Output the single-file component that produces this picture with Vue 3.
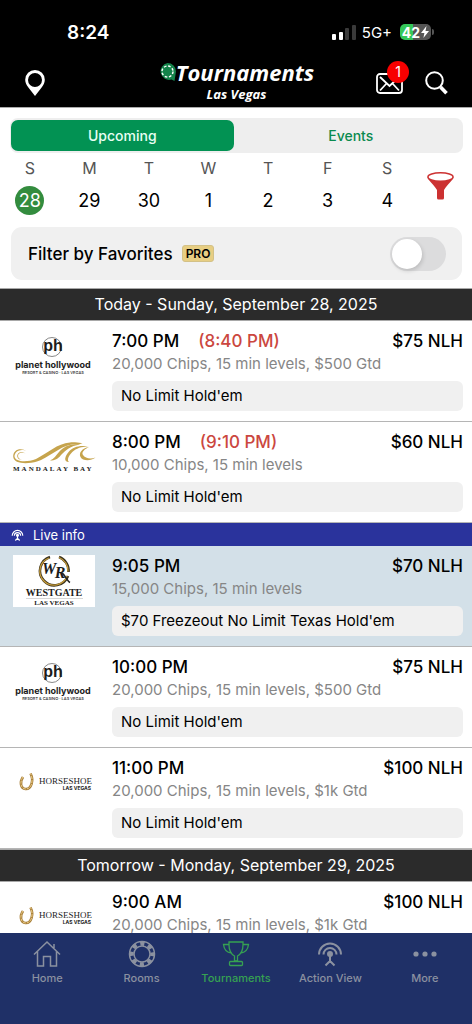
<script setup>
import { ref } from 'vue'

const view = ref('Upcoming')
const selectedDay = ref(28)
const favoritesOnly = ref(false)

const days = [
  { letter: 'S', date: 28 },
  { letter: 'M', date: 29 },
  { letter: 'T', date: 30 },
  { letter: 'W', date: 1 },
  { letter: 'T', date: 2 },
  { letter: 'F', date: 3 },
  { letter: 'S', date: 4 },
]

const sections = [
  {
    title: 'Today - Sunday, September 28, 2025',
    events: [
      { logo: 'planet', time: '7:00 PM', late: '(8:40 PM)', price: '$75 NLH', info: '20,000 Chips, 15 min levels, $500 Gtd', name: "No Limit Hold'em" },
      { logo: 'mandalay', time: '8:00 PM', late: '(9:10 PM)', price: '$60 NLH', info: '10,000 Chips, 15 min levels', name: "No Limit Hold'em" },
      { logo: 'westgate', time: '9:05 PM', price: '$70 NLH', info: '15,000 Chips, 15 min levels', name: "$70 Freezeout No Limit Texas Hold'em", live: true },
      { logo: 'planet', time: '10:00 PM', price: '$75 NLH', info: '20,000 Chips, 15 min levels, $500 Gtd', name: "No Limit Hold'em" },
      { logo: 'horseshoe', time: '11:00 PM', price: '$100 NLH', info: '20,000 Chips, 15 min levels, $1k Gtd', name: "No Limit Hold'em" },
    ],
  },
  {
    title: 'Tomorrow - Monday, September 29, 2025',
    events: [
      { logo: 'horseshoe', time: '9:00 AM', price: '$100 NLH', info: '20,000 Chips, 15 min levels, $1k Gtd' },
    ],
  },
]

const tabs = [
  { id: 'home', label: 'Home' },
  { id: 'rooms', label: 'Rooms' },
  { id: 'tournaments', label: 'Tournaments', active: true },
  { id: 'action', label: 'Action View' },
  { id: 'more', label: 'More' },
]
</script>

<template>
  <div class="app">
    <header class="top">
      <div class="status">
        <span class="clock">8:24</span>
        <div class="status-right">
          <svg class="signal" width="24" height="15" viewBox="0 0 24 15" aria-hidden="true">
            <rect x="0" y="9" width="4" height="6" rx="1" fill="#fff" />
            <rect x="7" y="7" width="4" height="8" rx="1" fill="#fff" />
            <rect x="13" y="3" width="4" height="12" rx="1" fill="#3a3a3a" />
            <rect x="20" y="0" width="4" height="15" rx="1" fill="#3a3a3a" />
          </svg>
          <span class="network">5G+</span>
          <span class="battery">
            <span>42</span>
            <svg width="8" height="12" viewBox="0 0 8 12" aria-hidden="true"><path d="M5.500 0 0 7h3.400L2.400 12 8 5H4.500z" fill="#fff" /></svg>
          </span>
        </div>
      </div>
      <div class="nav">
        <button class="icon-btn" aria-label="Location">
          <svg width="20" height="26" viewBox="0 0 20 26"><path fill="#fff" fill-rule="evenodd" d="M10 0a9.800 9.800 0 0 1 9.800 9.800c0 3-1.300 5.200-3 7.500L10 26l-6.800-8.700C1.500 15 .2 12.800.2 9.800A9.800 9.800 0 0 1 10 0zm0 3a7 7 0 1 0 0 14 7 7 0 0 0 0-14z" /></svg>
        </button>
        <h1 class="brand">
          <span class="brand-name">
            <svg width="17" height="18" viewBox="0 0 17 18" aria-hidden="true">
              <path d="M8.500 0A8.500 8.500 0 0 1 17 8.500L15.500 18l-3-1.500A8.500 8.500 0 1 1 8.500 0z" fill="#14834a" />
              <circle cx="8.500" cy="8.500" r="5.500" fill="none" stroke="#fff" stroke-width="1.400" stroke-dasharray="2.600 1.720" />
            </svg>
            <span>Tournaments</span>
          </span>
          <span class="brand-city">Las Vegas</span>
        </h1>
        <div class="nav-right">
          <button class="icon-btn mail" aria-label="Messages, 1 unread">
            <svg width="27" height="21" viewBox="0 0 27 21" fill="none" stroke="#fff" stroke-width="1.800">
              <rect x="1" y="1" width="25" height="19" rx="3" />
              <path d="M4 4l9.500 9L23 4M4 17.500l6.500-7M23 17.500l-6.500-7" />
            </svg>
            <span class="badge">1</span>
          </button>
          <button class="icon-btn" aria-label="Search">
            <svg width="23" height="24" viewBox="0 0 23 24" fill="none" stroke="#fff">
              <circle cx="9.500" cy="9.500" r="8.300" stroke-width="2" />
              <path d="M15.500 16l6 6.300" stroke-width="3.600" />
            </svg>
          </button>
        </div>
      </div>
    </header>

    <section class="controls">
      <div class="segment">
        <button v-for="v in ['Upcoming', 'Events']" :key="v" :class="{ on: view === v }" @click="view = v">{{ v }}</button>
      </div>

      <div class="week">
        <div class="days">
          <button v-for="d in days" :key="d.date" class="day" :class="{ on: selectedDay === d.date }" @click="selectedDay = d.date">
            <span class="letter">{{ d.letter }}</span>
            <span class="date">{{ d.date }}</span>
          </button>
        </div>
        <button class="icon-btn funnel" aria-label="Filter">
          <svg width="27" height="28" viewBox="0 0 27 28">
            <path d="M.5 5.500c.8 3 5.500 6 9.500 12.500V26q0 1.500 1.500 1.500h4q1.500 0 1.500-1.500v-8C21 11.500 25.700 8.500 26.500 5.500z" fill="#cc3131" />
            <ellipse cx="13.500" cy="5" rx="12.600" ry="4.200" fill="#fff" stroke="#cc3131" stroke-width="1.400" />
          </svg>
        </button>
      </div>

      <label class="favorites">
        <span class="fav-text">Filter by Favorites</span>
        <span class="pro">PRO</span>
        <input v-model="favoritesOnly" class="toggle" type="checkbox" />
      </label>
    </section>

    <main class="list">
      <section v-for="s in sections" :key="s.title">
        <h2 class="section-title">{{ s.title }}</h2>
        <article v-for="e in s.events" :key="e.time">
          <div v-if="e.live" class="live">
            <svg width="13" height="12" viewBox="0 0 26 25" fill="none" stroke="#fff" stroke-width="2.400">
              <path d="M2 14a11 11 0 1 1 22 0M6.500 14a6.500 6.500 0 1 1 13 0M13 13v7M8.500 24l4.500-4.500 4.500 4.500" />
              <circle cx="13" cy="13" r="2" fill="#fff" />
            </svg>
            <span>Live info</span>
          </div>
          <div class="row" :class="{ highlight: e.live }">
            <svg v-if="e.logo === 'planet'" class="logo" viewBox="0 0 82 52" role="img" aria-label="Planet Hollywood">
              <circle cx="39" cy="17" r="9.500" fill="none" stroke="#555" stroke-width=".7" />
              <text x="40" y="21" class="ph-mark">ph</text>
              <text x="40" y="38" class="ph-name">planet hollywood</text>
              <text x="40" y="44" class="ph-sub">RESORT &amp; CASINO · LAS VEGAS</text>
            </svg>
            <svg v-else-if="e.logo === 'mandalay'" class="logo" viewBox="0 0 82 52" role="img" aria-label="Mandalay Bay">
              <g fill="#c6a44d">
                <path d="M14 20.500C8 17 1.500 20.500 1.500 25.500 2 31 14 31.500 23 28 35 22 44 12.500 57 11.500c6-.6 9 1 12.500.5-4 2.500-8 1-12 1.700C46 16 35 27 24 30.500 14 33.500.5 33 .2 25.500 0 18.500 8 16 14 20.500z" />
                <path d="M12.500 22.500C9 20.500 5 22 5 25c0 2 2 3.500 4 4-3-.2-5-2-4.800-4.300C4.500 21 9.500 19.500 12.500 22.500z" />
                <path d="M67 13.500C57 15 53 19 48 24c-3 4-6 5.500-11 5.500 4-1.500 6-5 9-8.500C51 15.500 57 12.500 67 13.500z" />
                <path d="M76 16c-8-1-14 2-18 6.500-3 3.500-4 7-2 8.500-6 0-4-6 0-10.500C60 16 68 13.500 76 16z" />
                <path d="M76 16c-4 2-8 5-6 8 2 3.500 8 4.500 12.500 2.500-5 4-13 3.500-15-.5C65.500 22 69 17 76 16z" />
              </g>
              <text x="0" y="40" class="mb-name">MANDALAY BAY</text>
            </svg>
            <svg v-else-if="e.logo === 'westgate'" class="logo" viewBox="0 0 82 52" role="img" aria-label="Westgate Las Vegas">
              <rect width="82" height="52" fill="#fff" />
              <path d="M37 2A14.500 14.500 0 1 0 55 21M46 2a14.500 14.500 0 0 1 9.500 15" fill="none" stroke="#3b331f" stroke-width="2.600" />
              <path d="M36 3A14 14 0 1 0 54 21M46 2.500a14 14 0 0 1 9 14" fill="none" stroke="#c79d3a" stroke-width="1.300" />
              <text x="36" y="19" class="wg-mark">W</text>
              <text x="47" y="23" class="wg-mark">R</text>
              <path d="M49 18c4 3 5 8 8 9.500" fill="none" stroke="#222" stroke-width="1.600" />
              <text x="41" y="41" class="wg-name">WESTGATE</text>
              <path d="M13 43.500h57" stroke="#bbb" stroke-width=".6" />
              <text x="41" y="50" class="wg-sub">LAS VEGAS</text>
            </svg>
            <svg v-else class="logo" viewBox="0 0 82 52" role="img" aria-label="Horseshoe Las Vegas">
              <path d="M10 20c-3.500 5-2.500 11.500 2.500 12 6 .5 8.500-9 5-15.500" fill="none" stroke="#a87f3a" stroke-width="2.600" />
              <path d="M10 20c-3.500 5-2.500 11.500 2.500 12 6 .5 8.500-9 5-15.500" fill="none" stroke="#f0d28c" stroke-width="1" stroke-dasharray="3 1" />
              <text x="79" y="27" class="hs-name">HORSESHOE</text>
              <text x="78" y="33" class="hs-sub">LAS VEGAS</text>
            </svg>
            <div class="details">
              <div class="headline">
                <span class="time">{{ e.time }}</span>
                <span v-if="e.late" class="late">{{ e.late }}</span>
                <span class="price">{{ e.price }}</span>
              </div>
              <p class="info">{{ e.info }}</p>
              <p v-if="e.name" class="game">{{ e.name }}</p>
            </div>
          </div>
        </article>
      </section>
    </main>

    <nav class="tabs">
      <a v-for="t in tabs" :key="t.id" :href="'#' + t.id" class="tab" :class="{ on: t.active }">
        <svg width="28" height="28" viewBox="0 0 28 28" fill="none" stroke="currentColor" stroke-width="1.500" aria-hidden="true">
          <path v-if="t.id === 'home'" d="M1 14.500 14 2l13 12.500M4.500 11.500V26h6V16.500h7V26h6V11.500M21 8V4" />
          <template v-else-if="t.id === 'rooms'">
            <circle cx="14" cy="14" r="12.500" />
            <circle cx="14" cy="14" r="10.500" stroke-width="4.500" stroke-dasharray="4.247 4" stroke-dashoffset="2.100" />
            <circle cx="14" cy="14" r="8" />
          </template>
          <g v-else-if="t.id === 'tournaments'" stroke-width="1.300">
            <path d="M7 2h14v3c0 6-2 9-5.500 11v5h-3v-5C9 14 7 11 7 5zM7 4.500H1.500C2 9 4 12.500 9.500 13M21 4.500h5.500C26 9 24 12.500 18.500 13" />
            <rect x="7.500" y="21.500" width="13" height="4" rx="1" />
          </g>
          <g v-else-if="t.id === 'action'" stroke-width="2">
            <path d="M3 14.500a11 11 0 1 1 22 0M7.500 14.500a6.500 6.500 0 1 1 13 0M14 14v7M9.500 25.500 14 21l4.500 4.500" />
            <circle cx="14" cy="14" r="2" fill="currentColor" />
          </g>
          <g v-else fill="currentColor" stroke="none">
            <circle cx="5" cy="14" r="2.600" /><circle cx="14" cy="14" r="2.600" /><circle cx="23" cy="14" r="2.600" />
          </g>
        </svg>
        <span>{{ t.label }}</span>
      </a>
    </nav>
  </div>
</template>

<style>
body {
  background: #fff;
}
</style>

<style scoped>
.app {
  display: flex;
  flex-direction: column;
  height: 100vh;
  overflow: hidden;
  background: #fff;
  color: #000;
  font-family: Inter, "Liberation Sans", sans-serif;
}
.app * {
  box-sizing: border-box;
}
button {
  margin: 0;
  padding: 0;
  border: 0;
  background: none;
  color: inherit;
  font: inherit;
  cursor: pointer;
}
h1, h2, p {
  margin: 0;
  font-weight: 400;
}
.icon-btn {
  display: flex;
}

/* Header */
.top {
  flex: none;
  background: #000;
  color: #fff;
  border-bottom: 1px solid #aaa;
}
.status {
  display: flex;
  justify-content: space-between;
  align-items: center;
  height: 61px;
  padding: 3px 41px 0 67px;
}
.clock {
  font-size: 19px;
  font-weight: 600;
}
.status-right {
  display: flex;
  align-items: center;
  gap: 6px;
}
.network {
  font-size: 15px;
}
.battery {
  position: relative;
  display: flex;
  align-items: center;
  justify-content: center;
  gap: 1px;
  width: 31px;
  height: 16px;
  margin-left: 2px;
  border-radius: 5px;
  background: linear-gradient(90deg, #35c759 42%, #555 42%);
  font-size: 14px;
  font-weight: 700;
}
.battery::after {
  content: "";
  position: absolute;
  left: 32px;
  top: 5px;
  width: 2px;
  height: 6px;
  border-radius: 0 2px 2px 0;
  background: #555;
}
.nav {
  display: grid;
  grid-template-columns: 1fr auto 1fr;
  align-items: center;
  height: 46px;
  padding: 0 24px 2px 25px;
}
.brand {
  display: flex;
  flex-direction: column;
  align-items: center;
  font-family: "Open Sans", "Noto Sans", sans-serif;
  font-style: italic;
  font-weight: 700;
}
.brand-name {
  display: flex;
  align-items: center;
  font-size: 22px;
  line-height: 22px;
}
.brand-city {
  font-size: 13px;
  line-height: 22px;
}
.nav-right {
  display: flex;
  justify-content: flex-end;
  align-items: center;
  gap: 22px;
}
.mail {
  position: relative;
}
.badge {
  position: absolute;
  left: 11px;
  top: -12px;
  width: 22px;
  height: 22px;
  border-radius: 50%;
  background: #f80000;
  font-size: 14px;
  line-height: 22px;
  text-align: center;
}

/* Controls */
.controls {
  flex: none;
  padding: 10px 9px 8px 10px;
}
.segment {
  display: grid;
  grid-template-columns: 1fr 1fr;
  gap: 6px;
  padding: 2px 1px;
  border-radius: 8px;
  background: #eee;
}
.segment button {
  height: 31px;
  border-radius: 7px;
  color: #0a8a4e;
  font-size: 14px;
  font-weight: 500;
}
.segment button.on {
  background: #029253;
  color: #e8fff3;
}
.week {
  display: flex;
  align-items: center;
  margin: 4px 0 0 -10px;
}
.days {
  flex: 1;
  display: grid;
  grid-template-columns: repeat(7, 1fr);
}
.day {
  display: flex;
  flex-direction: column;
  align-items: center;
  gap: 7px;
}
.letter {
  color: #555;
  font-size: 16px;
  line-height: 22px;
}
.date {
  width: 29px;
  height: 29px;
  border-radius: 50%;
  font-size: 18px;
  line-height: 29px;
}
.day.on .date {
  background: #338c3e;
  color: #fff;
}
.funnel {
  justify-content: center;
  width: 46px;
}
.favorites {
  display: flex;
  align-items: center;
  height: 53px;
  margin: 12px 1px 0;
  padding: 0 16px 0 17px;
  border-radius: 11px;
  background: #f0f0f0;
}
.fav-text {
  font-size: 17px;
  font-weight: 500;
}
.pro {
  margin-left: 9px;
  padding: 0 3px;
  border: 1px solid #d3c187;
  border-radius: 3px;
  background: #e7ce83;
  font-size: 12px;
  font-weight: 600;
  line-height: 15px;
}
.toggle {
  appearance: none;
  display: flex;
  align-items: center;
  width: 56px;
  height: 34px;
  margin: 0 0 0 auto;
  padding: 2px;
  border-radius: 17px;
  background: #dcdcdd;
}
.toggle::before {
  content: "";
  width: 30px;
  height: 30px;
  border-radius: 50%;
  background: #fff;
  box-shadow: 1px 2px 4px rgba(0, 0, 0, 0.15);
}
.toggle:checked {
  justify-content: flex-end;
  background: #029253;
}

/* List */
.list {
  flex: 1;
  min-height: 0;
  overflow-y: auto;
  scrollbar-width: none;
}
.section-title {
  height: 33px;
  border: solid #a8a8a8;
  border-width: 1px 0;
  background: #2b2b2b;
  color: #fff;
  font-size: 16px;
  line-height: 31px;
  text-align: center;
}
.row {
  display: flex;
  gap: 17px;
  padding: 9px 9px 10px 13px;
  border-bottom: 1px solid #b5b5b5;
}
.row.highlight {
  background: #d3e0e8;
}
.live {
  display: flex;
  align-items: center;
  gap: 9px;
  height: 23px;
  padding-left: 11px;
  background: #2a339c;
  color: #fff;
  font-size: 13px;
}
.logo {
  flex: none;
  width: 82px;
  height: 52px;
  overflow: visible;
}
.details {
  flex: 1;
  min-width: 0;
}
.headline {
  display: flex;
  gap: 19px;
  font-size: 17px;
  font-weight: 500;
  line-height: 22px;
}
.late {
  color: #cb4740;
}
.price {
  margin-left: auto;
}
.info {
  margin-top: 1px;
  color: #868686;
  font-size: 15px;
  line-height: 22px;
}
.game {
  margin-top: 6px;
  padding: 0 9px;
  border-radius: 6px;
  background: #f0f0f0;
  font-size: 15px;
  line-height: 30px;
}

/* Venue logos */
.logo text {
  fill: #1c1c1c;
  text-anchor: middle;
}
.logo .ph-mark {
  font: 700 16px "Liberation Sans", sans-serif;
}
.logo .ph-name {
  font: 700 9px Inter, sans-serif;
}
.logo .ph-sub {
  font: 500 4px Inter, sans-serif;
}
.logo .mb-name {
  font: 700 7px "Liberation Serif", serif;
  letter-spacing: 2px;
  text-anchor: start;
}
.logo .wg-mark {
  font: italic 700 16px "Liberation Serif", serif;
}
.logo .wg-name {
  font: 700 10px "Liberation Serif", serif;
}
.logo .wg-sub {
  font: 700 7px "Liberation Serif", serif;
}
.logo .hs-name {
  font: 400 9px "Liberation Serif", serif;
  text-anchor: end;
}
.logo .hs-sub {
  font: 700 5px Inter, sans-serif;
  text-anchor: end;
}

/* Tab bar */
.tabs {
  flex: none;
  display: grid;
  grid-template-columns: repeat(5, 1fr);
  height: 91px;
  padding-top: 7px;
  background: #1f3067;
}
.tab {
  display: flex;
  flex-direction: column;
  align-items: center;
  gap: 2px;
  color: #8b91a0;
  font-size: 11px;
  font-weight: 500;
  line-height: 16px;
  text-decoration: none;
}
.tab.on {
  color: #36a152;
}
</style>
